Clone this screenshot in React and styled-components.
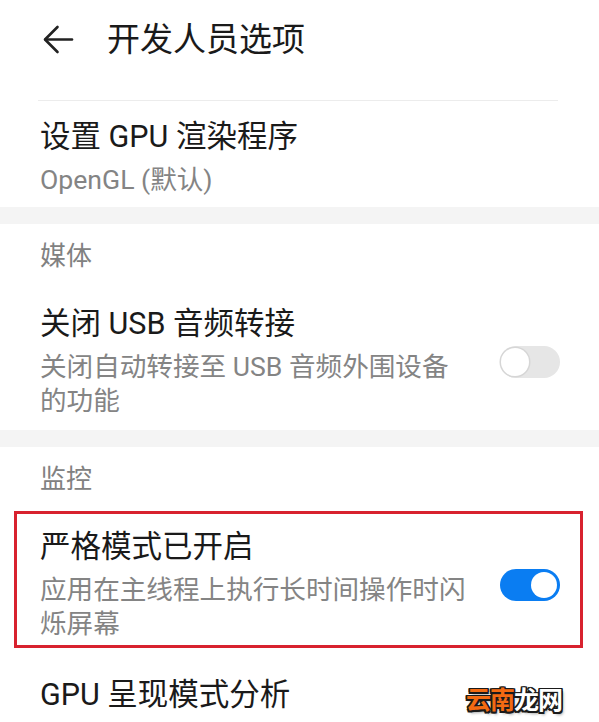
import React from "react";
import styled, { createGlobalStyle } from "styled-components";

const Global = createGlobalStyle`
  html, body { margin: 0; padding: 0; background: #ffffff; }
  body { font-family: Roboto, "Noto Sans CJK SC", "Noto Sans", sans-serif; -webkit-font-smoothing: antialiased; }
`;

const Screen = styled.div`
  position: relative;
  width: 599px;
  height: 722px;
  overflow: hidden;
  background: #ffffff;
`;

const Header = styled.header`
  height: 78px;
  display: flex;
  align-items: center;
  padding-left: 43px;
  gap: 33px;
`;

const BackIcon = styled.svg`
  width: 31px;
  height: 31px;
  flex: none;
`;

const Title = styled.h1`
  margin: 0;
  font-size: 33px;
  font-weight: 400;
  line-height: 1;
  color: #1a1a1a;
  letter-spacing: 0;
`;

const Divider = styled.div`
  margin: 22px 41px 0 38px;
  height: 1px;
  background: #ececec;
`;

const Band = styled.div`
  height: 17px;
  background: #f4f4f4;
`;

const SectionHeader = styled.div`
  padding: 15px 40px 15px;
  font-size: 26px;
  line-height: 34px;
  color: #818181;
`;

const Row = styled.div`
  display: flex;
  align-items: center;
  justify-content: space-between;
  padding: ${(p) => p.$pad || "18px 39px 12px 40px"};
`;

const Highlight = styled.div`
  margin: 0 16px 0 14px;
  border: 3px solid #d8222f;
`;

const TextBlock = styled.div`
  max-width: 440px;
  display: flex;
  flex-direction: column;
  gap: 8px;
`;

const ItemTitle = styled.div`
  font-size: 30.5px;
  line-height: 36px;
  color: #1a1a1a;
`;

const ItemSub = styled.div`
  font-size: 26.6px;
  line-height: 34px;
  color: #848484;
  white-space: nowrap;
`;

const Track = styled.div`
  position: relative;
  flex: none;
  width: 60px;
  height: 32px;
  border-radius: 16px;
  background: ${(p) => (p.$on ? "#0a7df2" : "#e6e6e6")};
`;

const Thumb = styled.div`
  position: absolute;
  top: ${(p) => (p.$on ? "3px" : "2px")};
  left: ${(p) => (p.$on ? "31px" : "1px")};
  width: ${(p) => (p.$on ? "26px" : "28px")};
  height: ${(p) => (p.$on ? "26px" : "28px")};
  border-radius: 50%;
  background: #ffffff;
  box-shadow: ${(p) => (p.$on ? "none" : "0 0 0 1.5px #d6d6d6")};
`;

const Watermark = styled.div`
  position: absolute;
  right: 37px;
  bottom: 9px;
  font-family: "Noto Sans CJK SC", sans-serif;
  font-weight: 700;
  font-size: 25px;
  line-height: 30px;
  letter-spacing: -1px;
  text-shadow: 1.5px 1.5px 0 #1a1a1a, -1.5px -1.5px 0 #1a1a1a, 1.5px -1.5px 0 #1a1a1a, -1.5px 1.5px 0 #1a1a1a,
    0 1.5px 0 #1a1a1a, 0 -1.5px 0 #1a1a1a, 1.5px 0 0 #1a1a1a, -1.5px 0 0 #1a1a1a,
    2px 3px 3px rgba(0, 0, 0, 0.35);
`;

const Mark = styled.span`
  color: ${(p) => p.$c};
`;

function Toggle({ on }) {
  return (
    <Track $on={on}>
      <Thumb $on={on} />
    </Track>
  );
}

function Item({ title, subs, toggle, pad }) {
  return (
    <Row $pad={pad}>
      <TextBlock>
        <ItemTitle>{title}</ItemTitle>
        {subs && (
          <div>
            {subs.map((s) => (
              <ItemSub key={s}>{s}</ItemSub>
            ))}
          </div>
        )}
      </TextBlock>
      {toggle !== undefined && <Toggle on={toggle} />}
    </Row>
  );
}

export default function App() {
  return (
    <>
      <Global />
      <Screen>
        <Header>
          <BackIcon viewBox="0 0 31 31" fill="none" stroke="#222" strokeWidth="2.6" strokeLinecap="round" strokeLinejoin="round">
            <path d="M29 15.5H2.5" />
            <path d="M14.5 3L2 15.5L14.5 28" />
          </BackIcon>
          <Title>开发人员选项</Title>
        </Header>
        <Divider />
        <Item title="设置 GPU 渲染程序" subs={["OpenGL (默认)"]} pad="18px 39px 10px 40px" />
        <Band />
        <SectionHeader>媒体</SectionHeader>
        <Item title="关闭 USB 音频转接" subs={["关闭自动转接至 USB 音频外围设备", "的功能"]} toggle={false} />
        <Band />
        <SectionHeader>监控</SectionHeader>
        <Highlight>
          <Item
            title="严格模式已开启"
            subs={["应用在主线程上执行长时间操作时闪", "烁屏幕"]}
            toggle={true}
            pad="15px 20px 4px 23px"
          />
        </Highlight>
        <Item title="GPU 呈现模式分析" pad="29px 39px 12px 40px" />
        <Watermark>
          <Mark $c="#f36a12">云南</Mark>
          <Mark $c="#ffffff">龙网</Mark>
        </Watermark>
      </Screen>
    </>
  );
}
